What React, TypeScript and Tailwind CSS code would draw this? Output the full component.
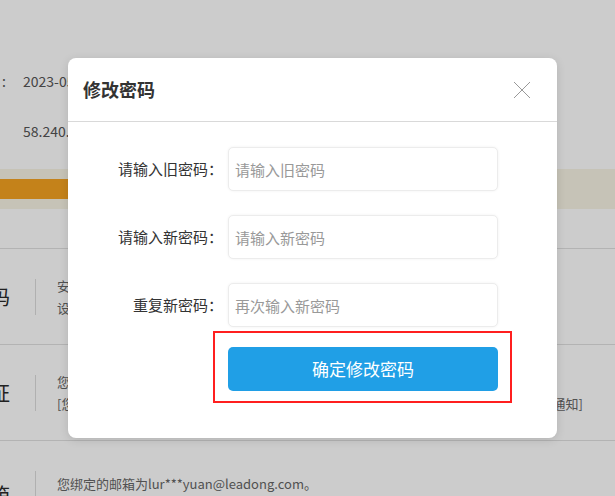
import React from "react";

const font = { fontFamily: '"Noto Sans CJK SC", "Noto Sans", sans-serif' };

function Row({ title, lines, right }: { title: string; lines: string[]; right?: string }) {
  return (
    <div className="flex h-[96px] items-center border-b border-[#e0e0e0]">
      <div className="flex w-[35px] shrink-0 justify-end overflow-hidden whitespace-nowrap pr-[25px] text-[20px] text-[#2a2a2a]">
        {title}
      </div>
      <div className="h-[36px] w-px shrink-0 bg-[#dcdcdc]" />
      <div className="ml-[21px] flex flex-1 flex-col text-[13px] leading-[22px] text-[#666]">
        {lines.map((l, i) => (
          <div key={i} className="flex justify-between whitespace-nowrap pr-[32px]">
            <span>{l}</span>
            {i === lines.length - 1 && right && <span>{right}</span>}
          </div>
        ))}
      </div>
    </div>
  );
}

function Field({ label, placeholder }: { label: string; placeholder: string }) {
  return (
    <div className="flex items-center">
      <label className="w-[160px] shrink-0 pr-[5px] text-right text-[15px] text-[#333]">{label}</label>
      <input
        type="password"
        placeholder={placeholder}
        className="h-[44px] w-[270px] rounded-[5px] border border-[#ececec] bg-white px-[6px] text-[15px] shadow-[0_0_3px_rgba(0,0,0,0.06)] outline-none placeholder:text-[#999]"
      />
    </div>
  );
}

export default function App() {
  return (
    <div className="relative h-[496px] w-[615px] overflow-hidden bg-white" style={font}>
      {/* page behind the dialog */}
      <div className="flex flex-col">
        <div className="flex h-[169px] flex-col pt-[68px] text-[14px] text-[#555]">
          <div className="flex h-[26px] items-center">
            <span className="flex w-[6px] justify-end overflow-hidden whitespace-nowrap">
              <span className="pr-[4px]">注册时间</span>
              <span>:</span>
            </span>
            <span className="ml-[17px]">2023-05-16 10:21:36</span>
          </div>
          <div className="mt-[24px] flex h-[26px] items-center">
            <span className="ml-[23px]">58.240.18.22</span>
          </div>
        </div>
        <div className="flex h-[40px] items-center bg-[#f8f4e5]">
          <div className="h-[20px] w-[300px] bg-[#f5a321]" />
        </div>
        <div className="h-[40px] border-b border-[#e0e0e0]" />
        <Row title="登录密码" lines={["安全性高的密码可以使账号更安全，建议您定期更换密码。", "设置一个包含字母、符号或数字中至少两项且长度超过6位的密码。"]} />
        <Row title="手机验证" lines={["您验证的手机：138****8888", "[您可以享受手机相关的安全及提醒服务，如：找回密码、资金变动"]} right="通知]" />
        <div className="flex h-[60px] items-start pt-[30px]">
          <div className="flex w-[35px] shrink-0 justify-end overflow-hidden whitespace-nowrap pr-[25px] pt-[10px] text-[20px] leading-[28px] text-[#2a2a2a]">
            邮箱
          </div>
          <div className="h-[36px] w-px shrink-0 bg-[#dcdcdc]" />
          <div className="ml-[21px] mt-[2px] whitespace-nowrap text-[13px] leading-[22px] text-[#666]">您绑定的邮箱为lur***yuan@leadong.com。</div>
        </div>
      </div>

      {/* mask */}
      <div className="absolute inset-0 bg-black/20" />

      {/* dialog */}
      <div className="absolute left-[68px] top-[58px] flex h-[380px] w-[489px] flex-col rounded-[8px] bg-white shadow-[0_2px_10px_rgba(0,0,0,0.12)]">
        <div className="flex h-[64px] shrink-0 items-center justify-between border-b border-[#d9d9d9] pl-[15px] pr-[26px]">
          <h2 className="text-[18px] font-bold text-[#333]">修改密码</h2>
          <svg width="18" height="18" viewBox="0 0 18 18" className="text-[#999]">
            <path d="M1 1L17 17M17 1L1 17" stroke="currentColor" strokeWidth="1" />
          </svg>
        </div>
        <div className="flex flex-col gap-[24px] pt-[25px]">
          <Field label="请输入旧密码：" placeholder="请输入旧密码" />
          <Field label="请输入新密码：" placeholder="请输入新密码" />
          <Field label="重复新密码：" placeholder="再次输入新密码" />
        </div>
        <div className="relative ml-[160px] mt-[20px] w-[270px]">
          <button className="h-[44px] w-full rounded-[5px] bg-[#209fe6] text-[17px] text-white">确定修改密码</button>
          <div className="pointer-events-none absolute -left-[15px] -right-[14px] -top-[16px] -bottom-[12px] border-[2.5px] border-[#ff1f1f]" />
        </div>
      </div>
    </div>
  );
}
